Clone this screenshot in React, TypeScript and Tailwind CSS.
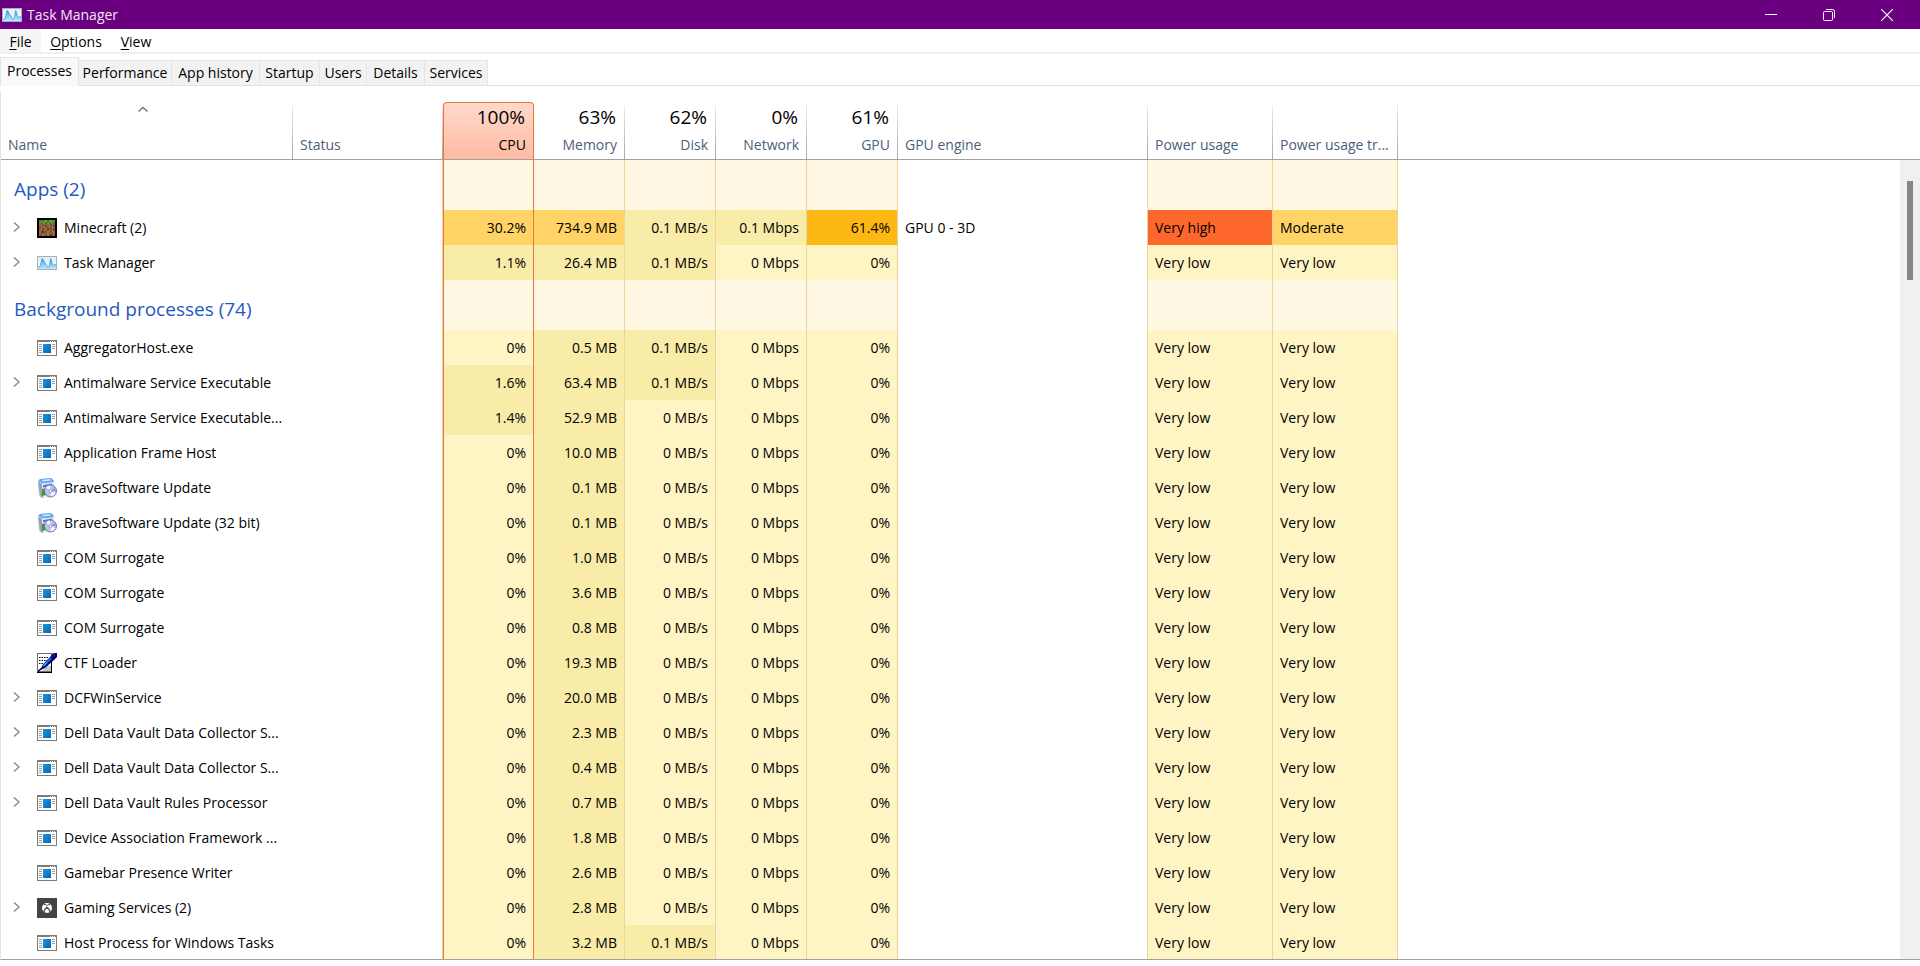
import { useState } from 'react';
import { clsx } from 'clsx';

type IconName = 'exe' | 'minecraft' | 'taskmgr' | 'installer' | 'ctf' | 'xbox';

interface Process {
  name: string;
  icon: IconName;
  expandable?: boolean;
  cpu?: string;
  memory: string;
  disk?: string;
  network?: string;
  gpu?: string;
  engine?: string;
  power?: string;
  trend?: string;
}

interface Group {
  title: string;
  processes: Process[];
}

const groups: Group[] = [
  {
    title: 'Apps (2)',
    processes: [
      {
        name: 'Minecraft (2)',
        icon: 'minecraft',
        expandable: true,
        cpu: '30.2%',
        memory: '734.9 MB',
        disk: '0.1 MB/s',
        network: '0.1 Mbps',
        gpu: '61.4%',
        engine: 'GPU 0 - 3D',
        power: 'Very high',
        trend: 'Moderate',
      },
      { name: 'Task Manager', icon: 'taskmgr', expandable: true, cpu: '1.1%', memory: '26.4 MB', disk: '0.1 MB/s' },
    ],
  },
  {
    title: 'Background processes (74)',
    processes: [
      { name: 'AggregatorHost.exe', icon: 'exe', memory: '0.5 MB', disk: '0.1 MB/s' },
      { name: 'Antimalware Service Executable', icon: 'exe', expandable: true, cpu: '1.6%', memory: '63.4 MB', disk: '0.1 MB/s' },
      { name: 'Antimalware Service Executable...', icon: 'exe', cpu: '1.4%', memory: '52.9 MB' },
      { name: 'Application Frame Host', icon: 'exe', memory: '10.0 MB' },
      { name: 'BraveSoftware Update', icon: 'installer', memory: '0.1 MB' },
      { name: 'BraveSoftware Update (32 bit)', icon: 'installer', memory: '0.1 MB' },
      { name: 'COM Surrogate', icon: 'exe', memory: '1.0 MB' },
      { name: 'COM Surrogate', icon: 'exe', memory: '3.6 MB' },
      { name: 'COM Surrogate', icon: 'exe', memory: '0.8 MB' },
      { name: 'CTF Loader', icon: 'ctf', memory: '19.3 MB' },
      { name: 'DCFWinService', icon: 'exe', expandable: true, memory: '20.0 MB' },
      { name: 'Dell Data Vault Data Collector S...', icon: 'exe', expandable: true, memory: '2.3 MB' },
      { name: 'Dell Data Vault Data Collector S...', icon: 'exe', expandable: true, memory: '0.4 MB' },
      { name: 'Dell Data Vault Rules Processor', icon: 'exe', expandable: true, memory: '0.7 MB' },
      { name: 'Device Association Framework ...', icon: 'exe', memory: '1.8 MB' },
      { name: 'Gamebar Presence Writer', icon: 'exe', memory: '2.6 MB' },
      { name: 'Gaming Services (2)', icon: 'xbox', expandable: true, memory: '2.8 MB' },
      { name: 'Host Process for Windows Tasks', icon: 'exe', memory: '3.2 MB', disk: '0.1 MB/s' },
    ],
  },
];

const tabs = [
  { label: 'Performance', width: 'w-[93px]' },
  { label: 'App history', width: 'w-[88px]' },
  { label: 'Startup', width: 'w-[60px]' },
  { label: 'Users', width: 'w-[47px]' },
  { label: 'Details', width: 'w-[58px]' },
  { label: 'Services', width: 'w-[63px]' },
];

const usage = [
  { label: 'Memory', total: '63%' },
  { label: 'Disk', total: '62%' },
  { label: 'Network', total: '0%' },
  { label: 'GPU', total: '61%' },
];

// Heat colour of a numeric cell; memory is never in the coldest band
const heat = (value: string, scale = 1) => {
  const n = parseFloat(value) / scale;
  if (n >= 60) return 'bg-[#fdb814]';
  if (n >= 20) return 'bg-[#ffd366]';
  if (n > 0) return 'bg-[#f9eca8]';
  return 'bg-[#fff4c4]';
};

const powerHeat = (value: string) => {
  if (value === 'Very high') return 'bg-[#fd672b]';
  if (value === 'Moderate') return 'bg-[#ffd366]';
  return 'bg-[#fff4c4]';
};

function TaskManagerIcon() {
  return (
    <svg width="20" height="14" viewBox="0 0 20 14" aria-hidden="true">
      <defs>
        <linearGradient id="tm-bg" x1="0" y1="0" x2="0" y2="1">
          <stop offset="0" stopColor="#e6ebef" />
          <stop offset="1" stopColor="#fbfdff" />
        </linearGradient>
        <linearGradient id="tm-fill" x1="0" y1="0" x2="0" y2="1">
          <stop offset="0" stopColor="#2f9be0" />
          <stop offset="0.500" stopColor="#7cc9f3" />
          <stop offset="1" stopColor="#bfe8fb" />
        </linearGradient>
      </defs>
      <rect x=".5" y=".5" width="19" height="13" fill="url(#tm-bg)" stroke="#a9b2ba" />
      <path d="M1 11 3 10.500 5 2.500 6 3 8 7 9.500 8.500 10.500 11.500 12 11 13 6 13.500 2.500 14.500 4 15.500 9 17 9.500 18 8 19 9.500V13H1Z" fill="url(#tm-fill)" />
      <path d="M1 11 3 10.500 5 2.500 6 3 8 7 9.500 8.500 10.500 11.500 12 11 13 6 13.500 2.500 14.500 4 15.500 9 17 9.500 18 8 19 9.500" fill="none" stroke="#3a9ddd" strokeWidth=".7" />
    </svg>
  );
}

function ExeIcon() {
  return (
    <svg width="20" height="16" viewBox="0 0 20 16" aria-hidden="true">
      <defs>
        <linearGradient id="exe-blue" x1="0" y1="0" x2="1" y2="1">
          <stop offset="0" stopColor="#1b96e2" />
          <stop offset="1" stopColor="#0565b8" />
        </linearGradient>
      </defs>
      <rect x=".5" y=".5" width="19" height="15" fill="#fff" stroke="#7d7a77" />
      <path d="M0 0H20V2H0Z" fill="#7d7a77" />
      <path d="M13 1.500h1m1 0h1m1 0h1" stroke="#e6e6e6" />
      <rect x="6" y="4" width="8" height="9" fill="url(#exe-blue)" />
      <path d="M2 4.500h3M2 6.500h3M2 8.500h3M2 10.500h3M2 12.500h3M15 4.500h3M15 6.500h3M15 8.500h3" stroke="#a09e9c" />
    </svg>
  );
}

// g/G grass, a-d shades of dirt
const dirt = [
  'gGgGGgGGgG',
  'GgGGgagGGb',
  'agacbGabca',
  'cabdabcabd',
  'bcacbacbca',
  'acbacdabab',
  'cabcabcacb',
  'abdabcabca',
  'cbabcaacbc',
  'adcabcbdaa',
];
const dirtColors: Record<string, string> = {
  g: '#427f24',
  G: '#5cab33',
  a: '#8f5d3c',
  b: '#774b2e',
  c: '#ab7550',
  d: '#603b23',
};

function MinecraftIcon() {
  return (
    <svg width="20" height="20" viewBox="0 0 20 20" shapeRendering="crispEdges" aria-hidden="true">
      <rect width="20" height="20" fill="#000" />
      <svg x="2" y="2" width="16" height="16" viewBox="0 0 10 10">
        {dirt.map((line, y) =>
          line.split('').map((c, x) => <rect key={`${x}-${y}`} x={x} y={y} width="1" height="1" fill={dirtColors[c]} />)
        )}
      </svg>
    </svg>
  );
}

function InstallerIcon() {
  return (
    <svg width="20" height="20" viewBox="0 0 20 20" aria-hidden="true">
      <path d="M1 4 3 1 15 0 17 4 15 18 4 20 2 18Z" fill="#c3d6e8" />
      <path d="M1 3 3 1 14 0 17 3 15 5 5 5Z" fill="#69a6ea" />
      <path d="M5 2 13 1 14 2.500 6 3.500Z" fill="#cfe6ff" />
      <path d="M1 4 5 6 6 20 3 18Z" fill="#93a4b5" />
      <path d="M5 6 16 4 15 17 6 20Z" fill="#e6eff8" />
      <path d="M6 7 15 5.500 15 8 6 9.500Z" fill="#4288de" />
      <path d="M5 11 9 10 9 13 5 14Z" fill="#df5a22" />
      <path d="M5 12.500 9 11.500 9 17 5 18Z" fill="#2ba032" />
      <circle cx="13.500" cy="13" r="6" fill="#bcc4ee" stroke="#6f79ad" />
      <path d="M13.500 13 9 9.500A6 6 0 0 1 13 7.500Z" fill="#f6f8ff" />
      <path d="M13.500 13 18.500 15A6 6 0 0 1 14 18.500Z" fill="#f6f8ff" />
      <path d="M13.500 13 18 9.500A6 6 0 0 1 19 13Z" fill="#9b93e6" />
      <circle cx="13.500" cy="13" r="1.500" fill="#fff" stroke="#8e95c4" />
    </svg>
  );
}

function CtfIcon() {
  return (
    <svg width="20" height="20" viewBox="0 0 20 20" aria-hidden="true">
      <rect x=".5" y=".5" width="14" height="18" fill="#fff" stroke="#6e6e6e" />
      <path d="M14.500 5V19.500M0 19.500H15" stroke="#000" fill="none" />
      <path d="M10 13h4v5H5Z" fill="#c6c6c6" />
      <path d="M2 4.500h10M2 7.500h9M2 10.500h6" stroke="#000" strokeDasharray="1.500 1" />
      <path d="M1 18.500 5 15" stroke="#000" strokeWidth="1.500" />
      <path d="M3.500 17 5.500 12 14 3 15.500 0.500 18 0 20 0V4L17 7 8 15Z" fill="#00006e" />
      <path d="M6 13.500 14 5" stroke="#0a6cf0" strokeWidth="2" />
      <path d="M6.500 13 10 9.500" stroke="#3fd6ff" />
      <path d="M15 4 18 1.500" stroke="#3038d8" />
    </svg>
  );
}

function XboxIcon() {
  return (
    <svg width="20" height="20" viewBox="0 0 20 20" aria-hidden="true">
      <rect width="20" height="20" fill="#444" />
      <circle cx="10" cy="10" r="5" fill="#fff" />
      <path d="M7 6.500C8.500 6.300 9.500 7.200 10 7.600 10.500 7.200 11.500 6.300 13 6.500" stroke="#444" fill="none" />
      <path d="M6.800 14C7.400 12 9 10 10 9.300 11 10 12.600 12 13.200 14" stroke="#444" strokeWidth="1.300" fill="none" />
    </svg>
  );
}

const icons = {
  exe: ExeIcon,
  minecraft: MinecraftIcon,
  taskmgr: TaskManagerIcon,
  installer: InstallerIcon,
  ctf: CtfIcon,
  xbox: XboxIcon,
};

function TitleBar() {
  return (
    <header className="flex h-[29px] shrink-0 items-center bg-[#6a0080] pl-0.5 pr-1">
      <TaskManagerIcon />
      <h1 className="ml-[5px] flex-1 text-sm text-[#f1e6f4]">Task Manager</h1>
      <button type="button" aria-label="Minimize" className="flex h-full w-[58px] items-center justify-center">
        <svg width="12" height="12" viewBox="0 0 12 12">
          <path d="M0 5.500H12" stroke="#fff" />
        </svg>
      </button>
      <button type="button" aria-label="Restore" className="flex h-full w-[58px] items-center justify-center">
        <svg width="12" height="12" viewBox="0 0 12 12" fill="none" stroke="#fff">
          <rect x=".5" y="2.500" width="9" height="9" rx="1" />
          <path d="M3 .5H9.500A2 2 0 0 1 11.500 2.500V9" />
        </svg>
      </button>
      <button type="button" aria-label="Close" className="flex h-full w-[58px] items-center justify-center">
        <svg width="12" height="12" viewBox="0 0 12 12">
          <path d="M0 0 12 12M12 0 0 12" stroke="#fff" strokeWidth="1.200" />
        </svg>
      </button>
    </header>
  );
}

function MenuBar() {
  return (
    <nav aria-label="Menu" className="flex h-[25px] shrink-0 border-b-2 border-[#f0f0f0]">
      <button type="button" className="w-[41px] bg-[#f5f5f5] pt-0.5">
        <span className="underline underline-offset-2">F</span>ile
      </button>
      <button type="button" className="w-[70px] pt-0.5">
        <span className="underline underline-offset-2">O</span>ptions
      </button>
      <button type="button" className="w-[50px] pt-0.5">
        <span className="underline underline-offset-2">V</span>iew
      </button>
    </nav>
  );
}

function TabStrip() {
  return (
    <div role="tablist" className="flex h-8 shrink-0 items-end pt-[3px]">
      <button
        type="button"
        role="tab"
        aria-selected="true"
        className="h-full w-[79px] border-x border-t border-[#e5e5e5] bg-[#f9f9f9] pb-0.5"
      >
        Processes
      </button>
      <div className="flex flex-1 border-b border-[#e2e2e2]">
        {tabs.map((tab) => (
          <button
            key={tab.label}
            type="button"
            role="tab"
            aria-selected="false"
            className={clsx('h-[25px] border-r border-t border-[#e5e5e5] bg-[#f2f2f2]', tab.width)}
          >
            {tab.label}
          </button>
        ))}
      </div>
    </div>
  );
}

interface HeaderCellProps {
  label: string;
  total?: string;
  sorted?: boolean;
}

function HeaderCell({ label, total, sorted }: HeaderCellProps) {
  return (
    <th scope="col" className="border-b border-[#a0a0a0] p-0 pt-[3px] font-normal">
      <div className="flex h-[54px]">
        <button
          type="button"
          className={clsx('flex min-w-0 flex-1 flex-col px-[7px] pb-1', total ? 'items-end' : 'items-start')}
        >
          {total && <span className="pr-px text-[19px] leading-6 text-black">{total}</span>}
          {sorted && (
            <svg width="12" height="8" viewBox="0 0 12 8" className="mr-2 self-center" aria-hidden="true">
              <path d="M1.500 6.500 6 2.500 10.500 6.500" fill="none" stroke="#6b7a94" strokeWidth="1.500" />
            </svg>
          )}
          <span className="mt-auto max-w-full overflow-hidden whitespace-nowrap leading-5 text-[#4c607a]">{label}</span>
        </button>
        <span className="w-px bg-linear-to-b from-[#ececec] to-[#a8a8a8]" />
      </div>
    </th>
  );
}

function CpuHeader() {
  return (
    <th scope="col" className="border-b border-[#a0a0a0] p-0 font-normal">
      <button
        type="button"
        className="flex h-[57px] w-full flex-col items-end rounded-t-sm border-x border-t border-[#f56e35] bg-linear-to-b from-[#ffd9cc] to-[#ffbaa2] px-[7px] pb-1 pt-0.5"
      >
        <span className="pr-px text-[19px] leading-6 text-black">100%</span>
        <span className="mt-auto leading-5">CPU</span>
      </button>
    </th>
  );
}

const numberCell = 'h-[35px] border-r border-[#e8d49c] p-0 pr-[7px] text-right';
const cpuBorder = 'border-x border-[#ec7440]';

function ProcessRow({ process }: { process: Process }) {
  const [open, setOpen] = useState(false);
  const Icon = icons[process.icon];
  const { cpu = '0%', disk = '0 MB/s', network = '0 Mbps', gpu = '0%', power = 'Very low', trend = 'Very low' } = process;

  return (
    <tr>
      <td className="h-[35px] p-0">
        <div className="flex items-center">
          <div className="flex w-9 shrink-0 pl-[11px]">
            {process.expandable && (
              <button
                type="button"
                aria-label={`Expand ${process.name}`}
                aria-expanded={open}
                onClick={() => setOpen(!open)}
              >
                <svg width="9" height="12" viewBox="0 0 9 12" fill="none" stroke="#8c8c8c" strokeWidth="1.500">
                  <path d="M2 .5 7 5 2 9.500" />
                </svg>
              </button>
            )}
          </div>
          <div className="w-5 shrink-0">
            <Icon />
          </div>
          <span className="ml-[7px] whitespace-nowrap">{process.name}</span>
        </div>
      </td>
      <td className="border-r border-[#e8d49c] p-0" />
      <td className={clsx('h-[35px] p-0 pr-[7px] text-right', cpuBorder, heat(cpu))}>{cpu}</td>
      <td className={clsx(numberCell, heat(process.memory, 20))}>{process.memory}</td>
      <td className={clsx(numberCell, heat(disk))}>{disk}</td>
      <td className={clsx(numberCell, heat(network))}>{network}</td>
      <td className={clsx(numberCell, heat(gpu))}>{gpu}</td>
      <td className="border-r border-[#e8d49c] p-0 pl-[7px]">{process.engine}</td>
      <td className={clsx('border-r border-[#e8d49c] p-0 pl-[7px]', powerHeat(power))}>{power}</td>
      <td className={clsx('border-r border-[#e8d49c] p-0 pl-[7px]', powerHeat(trend))}>{trend}</td>
      <td className="p-0" />
    </tr>
  );
}

function GroupRow({ title }: { title: string }) {
  const tint = 'border-r border-[#e8d49c] bg-[#fff8e3] p-0';
  return (
    <tr>
      <th scope="rowgroup" className="h-[50px] p-0 pl-[13px] pt-2.5 text-left text-[19px] font-normal text-[#2459c4]">
        <span className="whitespace-nowrap">{title}</span>
      </th>
      <td className="border-r border-[#e8d49c] p-0" />
      <td className={clsx('bg-[#fff8e3] p-0', cpuBorder)} />
      <td className={tint} />
      <td className={tint} />
      <td className={tint} />
      <td className={tint} />
      <td className="border-r border-[#e8d49c] p-0" />
      <td className={tint} />
      <td className={tint} />
      <td className="p-0" />
    </tr>
  );
}

export default function App() {
  return (
    <div className="flex h-screen flex-col overflow-hidden bg-white pb-1.5 font-['Open_Sans','Noto_Sans',sans-serif] text-sm text-black">
      <TitleBar />
      <MenuBar />
      <TabStrip />
      <main className="flex min-h-0 flex-1 flex-col pt-1.5">
        <div className="flex min-h-0 flex-1 border-b border-l border-b-[#a0a0a0] border-l-[#e3e3e3]">
          <div className="min-w-0 flex-1 overflow-hidden pt-[10px]">
            <table className="w-full table-fixed border-separate border-spacing-0">
              <colgroup>
                <col className="w-[292px]" />
                <col className="w-[150px]" />
                <col className="w-[91px]" />
                <col className="w-[91px]" />
                <col className="w-[91px]" />
                <col className="w-[91px]" />
                <col className="w-[91px]" />
                <col className="w-[250px]" />
                <col className="w-[125px]" />
                <col className="w-[125px]" />
                <col />
              </colgroup>
              <thead>
                <tr>
                  <HeaderCell label="Name" sorted />
                  <HeaderCell label="Status" />
                  <CpuHeader />
                  {usage.map((u) => (
                    <HeaderCell key={u.label} label={u.label} total={u.total} />
                  ))}
                  <HeaderCell label="GPU engine" />
                  <HeaderCell label="Power usage" />
                  <HeaderCell label="Power usage tr..." />
                  <td className="border-b border-[#a0a0a0] p-0" />
                </tr>
              </thead>
              {groups.map((group) => (
                <tbody key={group.title}>
                  <GroupRow title={group.title} />
                  {group.processes.map((process, i) => (
                    <ProcessRow key={i} process={process} />
                  ))}
                </tbody>
              ))}
            </table>
          </div>
          {/* Scroll bar */}
          <div className="flex w-5 shrink-0 flex-col">
            <div className="h-[68px] border-b border-[#a0a0a0]" />
            <div className="flex-1 bg-[#f0f0f0] pl-[7px] pt-[21px]">
              <div className="h-[99px] w-1.5 bg-[#868686]" />
            </div>
          </div>
        </div>
      </main>
    </div>
  );
}
